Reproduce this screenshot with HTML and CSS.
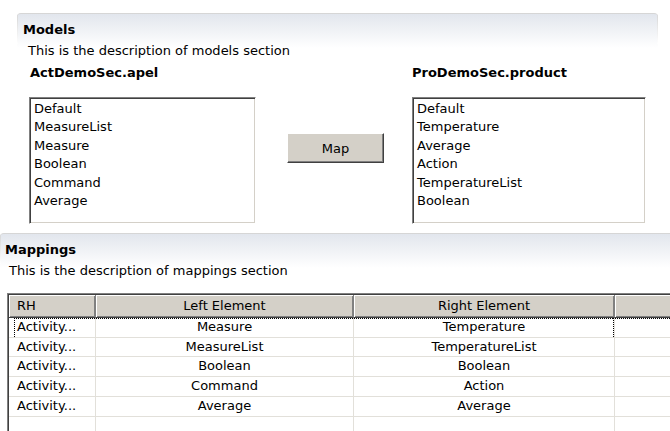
FILE: index.html
```html
<!DOCTYPE html>
<html lang="en">
<head>
  <meta charset="UTF-8" />
  <title>Models and Mappings</title>
  <link rel="stylesheet" href="styles.css">
</head>
<body>

  <div class="section models">
    <div class="sec-head">Models</div>
    <div class="sec-desc">This is the description of models section</div>
    <div class="model-row">
      <div class="model-col">
        <div class="col-title">ActDemoSec.apel</div>
        <div class="listbox left-list">
          <div>Default</div>
          <div>MeasureList</div>
          <div>Measure</div>
          <div>Boolean</div>
          <div>Command</div>
          <div>Average</div>
        </div>
      </div>
      <div class="map-col">
        <button class="map-btn">Map</button>
      </div>
      <div class="model-col">
        <div class="col-title">ProDemoSec.product</div>
        <div class="listbox right-list">
          <div>Default</div>
          <div>Temperature</div>
          <div>Average</div>
          <div>Action</div>
          <div>TemperatureList</div>
          <div>Boolean</div>
        </div>
      </div>
    </div>
  </div>

  <div class="section mappings">
    <div class="sec-head">Mappings</div>
    <div class="sec-desc">This is the description of mappings section</div>
    <div class="grid">
      <table>
        <colgroup>
          <col class="c-rh">
          <col class="c-left">
          <col class="c-right">
          <col class="c-rest">
        </colgroup>
        <thead>
          <tr>
            <th class="rh">RH</th>
            <th>Left Element</th>
            <th>Right Element</th>
            <th></th>
          </tr>
        </thead>
        <tbody>
          <tr class="focus">
            <td class="rh">Activity...</td>
            <td>Measure</td>
            <td class="right-el">Temperature</td>
            <td></td>
          </tr>
          <tr>
            <td class="rh">Activity...</td>
            <td>MeasureList</td>
            <td>TemperatureList</td>
            <td></td>
          </tr>
          <tr>
            <td class="rh">Activity...</td>
            <td>Boolean</td>
            <td>Boolean</td>
            <td></td>
          </tr>
          <tr>
            <td class="rh">Activity...</td>
            <td>Command</td>
            <td>Action</td>
            <td></td>
          </tr>
          <tr>
            <td class="rh">Activity...</td>
            <td>Average</td>
            <td>Average</td>
            <td></td>
          </tr>
          <tr>
            <td class="rh"></td>
            <td></td>
            <td></td>
            <td></td>
          </tr>
        </tbody>
      </table>
    </div>
  </div>

</body>
</html>
```

FILE: styles.css
```css
html, body { overflow: hidden; }
body { margin: 0; background: #fff; color: #000; font-family: "DejaVu Sans", Verdana, sans-serif; font-size: 13px; width: 670px; height: 431px; }

/* form sections: top border only, the sides fade out with the title band */
.section { box-sizing: border-box; border-top: 1px solid #d6d6d6; border-radius: 4px 4px 0 0;
  background:
    linear-gradient(#d6d6d6, #fff 30px) left top / 1px 30px no-repeat,
    linear-gradient(#d6d6d6, #fff 30px) right top / 1px 30px no-repeat,
    linear-gradient(#e2e6ed, #fff 34px) 0 0 / 100% 34px no-repeat; }
.models { margin: 13px 0 0 17px; width: 641px; height: 220px; }
.mappings { width: 690px; height: 200px; }
.sec-head { font-weight: bold; line-height: 18px; padding: 7px 0 0 6px; }
.mappings .sec-head { padding-left: 5px; }
.sec-desc { line-height: 18px; margin-top: 3px; padding-left: 11px; }
.mappings .sec-desc { padding-left: 9px; }

/* models */
.model-row { display: flex; margin-top: 1px; padding-left: 12px; }
.col-title { font-weight: bold; line-height: 18px; margin: 3px 0 15px; padding-left: 1px; }
.listbox { box-sizing: border-box; height: 127px; padding: 2px 0 0 4px; line-height: 18.4px; border: 1px solid; border-color: #808080 #fff #fff #808080; box-shadow: inset 1px 1px #404040, inset -1px -1px #d4d0c8; }
.left-list { width: 227px; }
.right-list { width: 234px; margin-left: 1px; }
.map-col { margin: 72px 27px 0 31px; }
.map-btn { width: 97px; height: 30px; padding: 0; font: inherit; color: #000; background: #d4d0c8; border: 1px solid; border-color: #fff #404040 #404040 #fff; box-shadow: inset -1px -1px #808080; cursor: pointer; }

/* mappings table */
.grid { margin: 13px 0 0 7px; border-top: 1px solid #808080; border-left: 1px solid #808080; }
table { table-layout: fixed; width: 685px; border-collapse: separate; border-spacing: 0; border-top: 1px solid #404040; border-left: 1px solid #404040; }
.c-rh { width: 87px; }
.c-left { width: 258px; }
.c-right { width: 261px; }
.c-rest { width: 79px; }
th { padding: 0; font-weight: normal; line-height: 22px; background: #d4d0c8; border-right: 1px solid #808080; border-bottom: 1px solid #404040; box-shadow: inset 1px 1px #fff, inset -1px -1px #808080; white-space: nowrap; }
td { padding: 0; height: 18.7px; line-height: 18.7px; text-align: center; border-right: 1px solid #e2e0da; border-bottom: 1px solid #e2e0da; white-space: nowrap; overflow: hidden; }
th.rh, td.rh { text-align: left; padding-left: 8px; }
tr.focus td { background: repeating-linear-gradient(90deg, #000 0 1px, transparent 1px 2px) 0 0 / 100% 1px no-repeat; }
tr.focus td.rh { background:
  repeating-linear-gradient(90deg, #000 0 1px, transparent 1px 2px) 5px 0 / 100% 1px no-repeat,
  repeating-linear-gradient(180deg, #000 0 1px, transparent 1px 2px) 5px 0 / 1px 100% no-repeat; }
tr.focus td.right-el { background:
  repeating-linear-gradient(90deg, #000 0 1px, transparent 1px 2px) 0 0 / 100% 1px no-repeat,
  repeating-linear-gradient(180deg, #000 0 1px, transparent 1px 2px) 100% 0 / 1px 100% no-repeat; }
```
